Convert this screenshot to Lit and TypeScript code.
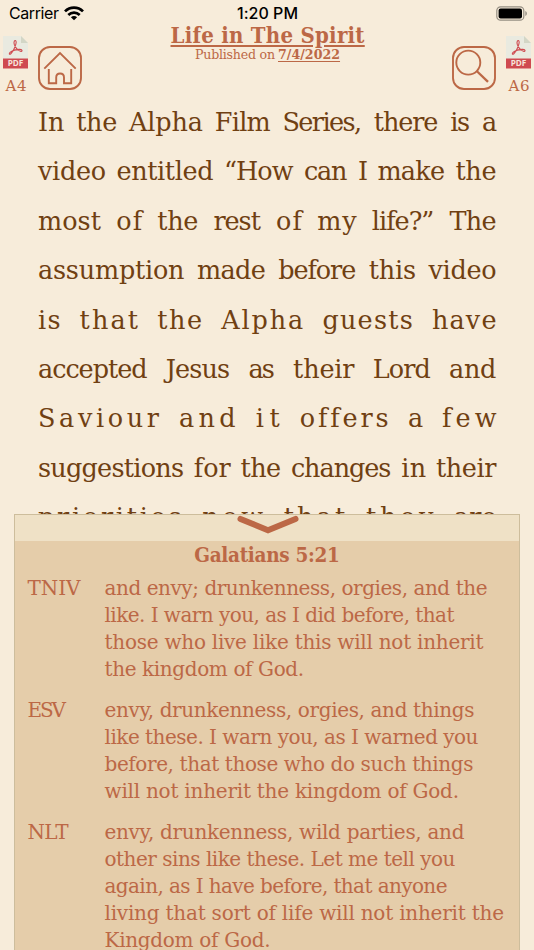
import { LitElement, html, css, svg } from "lit";
import { customElement, property } from "lit/decorators.js";

type Word = [string, number];

const article: Word[][] = [
  [["In", 25.5], ["the", 40], ["Alpha", 73], ["Film", 55], ["Series,", 78.5], ["there", 63.7], ["is", 19], ["a", 13.5]],
  [["video", 67], ["entitled", 96], ["“How", 68.5], ["can", 42.5], ["I", 8], ["make", 66.5], ["the", 40]],
  [["most", 62], ["of", 25], ["the", 40], ["rest", 46.5], ["of", 25], ["my", 38.5], ["life?”", 61.5], ["The", 46]],
  [["assumption", 145.5], ["made", 68], ["before", 77], ["this", 46.5], ["video", 67]],
  [["is", 21.5], ["that", 57.5], ["the", 44], ["Alpha", 81], ["guests", 89.5], ["have", 63.5]],
  [["accepted", 108.5], ["Jesus", 63.5], ["as", 25.5], ["their", 60.5], ["Lord", 57], ["and", 46.5]],
  [["Saviour", 120], ["and", 55.5], ["it", 23], ["offers", 87], ["a", 13], ["few", 53.5]],
  [["suggestions", 145], ["for", 36], ["the", 39.5], ["changes", 99.5], ["in", 24], ["their", 59.5]],
  [["priorities", 142.5], ["now", 60], ["that", 60.5], ["they", 66.5], ["are", 41.5]],
];

const verses: { name: Word; lines: Word[] }[] = [
  {
    name: ["TNIV", 52],
    lines: [
      ["and envy; drunkenness, orgies, and the", 382],
      ["like. I warn you, as I did before, that", 349],
      ["those who live like this will not inherit", 378],
      ["the kingdom of God.", 198.6],
    ],
  },
  {
    name: ["ESV", 37.5],
    lines: [
      ["envy, drunkenness, orgies, and things", 369],
      ["like these. I warn you, as I warned you", 373],
      ["before, that those who do such things", 368],
      ["will not inherit the kingdom of God.", 353.5],
    ],
  },
  {
    name: ["NLT", 40],
    lines: [
      ["envy, drunkenness, wild parties, and", 359],
      ["other sins like these. Let me tell you", 350],
      ["again, as I have before, that anyone", 342],
      ["living that sort of life will not inherit the", 398.5],
      ["Kingdom of God.", 165],
    ],
  },
];

/** A run of text tracked so that it fills a given width. */
@customElement("fit-text")
class FitText extends LitElement {
  @property() text = "";
  @property({ type: Number }) width = 0;

  static styles = css`
    :host { display: inline-block; white-space: pre; flex: none; }
    .run { display: inline-block; text-decoration: inherit; }
  `;

  firstUpdated() {
    const run = this.renderRoot.querySelector(".run") as HTMLElement;
    const natural = run.getBoundingClientRect().width;
    const gaps = this.text.length - 1;
    this.style.width = `${this.width}px`;
    if (gaps > 0) {
      const gap = (this.width + 1 - natural) / gaps;
      run.style.letterSpacing = `${gap}px`;
      run.style.marginRight = `${-gap - 1}px`;
    } else {
      run.style.marginRight = `${this.width - natural}px`;
    }
  }

  render() {
    return html`<span class="run">${this.text}</span>`;
  }
}

const fit = ([text, width]: Word) => html`<fit-text .text=${text} .width=${width}></fit-text>`;

const pdfIcon = svg`
  <svg width="25" height="33" viewBox="0 0 25 33">
    <path d="M0 0H18L25 7V23H0Z" fill="#e9eae0"/>
    <path d="M18 0L25 7H18Z" fill="#d3d6c6"/>
    <rect y="22.5" width="25" height="10" fill="#cf4a50"/>
    <path d="M11.3 5.2C12.6 3.6 13.8 5.2 12.8 8.3C11.5 12.4 9.6 16 7.8 17.8C6.3 19 5.6 17.6 7.3 16.2C9.5 14.5 13.7 13.3 16.9 13.4C19.8 13.6 19.6 15.6 17.4 15.3C14.8 14.8 12.1 11.3 11.2 8.2C10.9 6.9 10.9 5.9 11.3 5.2Z" fill="none" stroke="#cf4a50" stroke-width="1.1"/>
    <text x="12.5" y="30.4" text-anchor="middle" font-family="Open Sans, sans-serif" font-size="8.2" font-weight="700" fill="#f7e4dc">PDF</text>
  </svg>`;

const homeIcon = svg`
  <svg width="44" height="44" viewBox="0 0 44 44" fill="none" stroke="#bc6846" stroke-width="1.9">
    <rect x="1" y="1" width="42" height="42" rx="11"/>
    <path d="M6.3 22.7L22 7L37.7 22.7"/>
    <path d="M10.8 23V37.2H18.2V31.5C18.2 26.2 26 26.2 26 31.5V37.2H33.2V23"/>
  </svg>`;

const searchIcon = svg`
  <svg width="44" height="44" viewBox="0 0 44 44" fill="none" stroke="#bc6846" stroke-width="1.9">
    <rect x="1" y="1" width="42" height="42" rx="11"/>
    <circle cx="16.3" cy="16.6" r="12"/>
    <path d="M24.7 25L36 35.8" stroke-width="2.3"/>
  </svg>`;

@customElement("app-root")
class AppRoot extends LitElement {
  static styles = css`
    :host {
      display: flex; flex-direction: column; position: relative;
      width: 534px; height: 950px; overflow: hidden;
      background: #f7ecda; color: #bc6846;
      font-family: "DejaVu Serif", serif;
    }
    svg { display: block; }
    .status {
      display: grid; grid-template-columns: 1fr auto 1fr; flex: none;
      height: 22px; padding: 5px 6px 0 9px; box-sizing: border-box;
      font: 400 16px/17px Inter, sans-serif; color: #000;
    }
    .carrier { display: flex; gap: 6px; }
    .time { font-weight: 500; margin-right: 3px; }
    .battery { justify-self: end; margin-top: 1px; }
    .carrier svg { margin-top: 1px; }
    .top { display: flex; flex: none; height: 76px; padding: 0 3px; box-sizing: border-box; }
    .pdf { width: 25px; padding-top: 13.5px; display: flex; flex-direction: column; align-items: center; }
    .size { font-size: 15px; line-height: 20px; margin-top: 7.5px; }
    .square { padding-top: 24px; margin: 0 10px; }
    .titles { flex: 1; display: flex; flex-direction: column; align-items: center; }
    .title {
      font: 700 22px/26px "DejaVu Serif Condensed", "DejaVu Serif", serif;
      font-stretch: condensed; height: 24px;
    }
    .title fit-text { text-decoration: underline 1.8px; text-underline-offset: 2px; }
    .date { font-size: 12.6px; line-height: 18px; display: flex; gap: 4px; }
    .date b fit-text { text-decoration: underline 1px; text-underline-offset: 1.5px; }
    .article {
      flex: 1; padding: 0 38.5px 0 38px; color: #704012;
      font-size: 25.5px; line-height: 49.4px;
    }
    .line { display: flex; justify-content: space-between; height: 49.4px; }
    .sheet {
      position: absolute; left: 14px; right: 14px; top: 514px; height: 450px;
      box-sizing: border-box; border: 1px solid #cdbd9c;
      background: #e5cdaa; font-size: 20px; line-height: 27px;
    }
    .handle { height: 26px; background: #efe1c6; display: flex; justify-content: center; }
    .heading {
      height: 34px; box-sizing: border-box; text-align: center; padding: 1px 1px 0 0;
      font: 700 20.5px/27px "DejaVu Serif Condensed", "DejaVu Serif", serif;
      font-stretch: condensed;
    }
    .verse { display: grid; grid-template-columns: 77px 1fr; padding: 0 0 14px 12.5px; }
    .verse .text { display: flex; flex-direction: column; }
  `;

  render() {
    return html`
      <div class="status">
        <div class="carrier">
          <fit-text .text=${"Carrier"} .width=${49}></fit-text>
          <svg width="20" height="15" viewBox="0 0 20 15" fill="none" stroke="#000" stroke-width="2.7">
            <path d="M1 5.4C6 .4 14 .4 19 5.4"/>
            <path d="M4.3 8.9C7.6 5.8 12.4 5.8 15.7 8.9"/>
            <path d="M10 14.2L6.9 11.2C8.7 9.6 11.3 9.6 13.1 11.2Z" fill="#000" stroke="none"/>
          </svg>
        </div>
        <div class="time"><fit-text .text=${"1:20 PM"} .width=${60}></fit-text></div>
        <svg class="battery" width="32" height="15" viewBox="0 0 32 15">
          <rect x=".8" y=".8" width="27" height="13.4" rx="3.8" fill="none" stroke="#958e82" stroke-width="1.2"/>
          <rect x="2.6" y="2.6" width="23.4" height="9.8" rx="2" fill="#000"/>
          <path d="M29.3 5C31.4 5.7 31.4 9.3 29.3 10Z" fill="#958e82"/>
        </svg>
      </div>
      <header class="top">
        <div class="pdf">${pdfIcon}<div class="size">${fit(["A4", 20])}</div></div>
        <div class="square">${homeIcon}</div>
        <div class="titles">
          <div class="title">${fit(["Life in The Spirit", 193])}</div>
          <div class="date">${fit(["Published on", 79])}<b>${fit(["7/4/2022", 61])}</b></div>
        </div>
        <div class="square">${searchIcon}</div>
        <div class="pdf">${pdfIcon}<div class="size">${fit(["A6", 20])}</div></div>
      </header>
      <main class="article">
        ${article.map((line) => html`<div class="line">${line.map(fit)}</div>`)}
      </main>
      <section class="sheet">
        <div class="handle">
          <svg width="64" height="20" viewBox="0 0 64 20">
            <path d="M5.5 3.9L33 15.3L60.5 3.9" fill="none" stroke="#bc6846" stroke-width="6" stroke-linecap="round"/>
          </svg>
        </div>
        <div class="heading">${fit(["Galatians 5:21", 144.5])}</div>
        ${verses.map((v) => html`
          <div class="verse">
            <div>${fit(v.name)}</div>
            <div class="text">${v.lines.map(fit)}</div>
          </div>`)}
      </section>
    `;
  }
}
